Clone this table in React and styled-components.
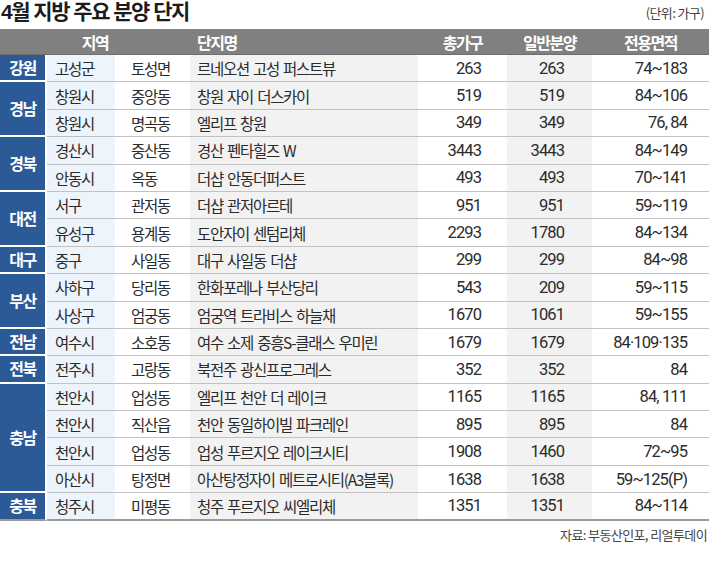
import React from 'react';
import styled, { createGlobalStyle } from 'styled-components';

const colors = {
  blue: '#2b5a96',
  header: '#808080',
  text: '#2b2b2b',
  line: '#c2c2c2',
  bottom: '#9a9a9a',
  lightBlue: '#edf4fb',
  lightGrey: '#f2f2f2',
  white: '#ffffff',
};

const GlobalStyle = createGlobalStyle`
  body {
    margin: 0;
    background: #fff;
    font-family: "Noto Sans CJK KR", "Noto Sans", sans-serif;
    color: ${colors.text};
  }
`;

const Page = styled.div`
  width: 709px;
  height: 583px;
`;

const TitleBar = styled.div`
  display: flex;
  justify-content: space-between;
  align-items: flex-start;
  height: 29px;
`;

// Liberation Sans first keeps the line box tight; hangul comes from Noto CJK
const Title = styled.h1`
  margin: 0;
  padding-left: 1px;
  font-family: "Liberation Sans", "Noto Sans CJK KR", sans-serif;
  font-size: 21px;
  line-height: 24px;
  font-weight: 700;
  letter-spacing: -1.5px;
  color: #1c1c1c;
`;

const Unit = styled.span`
  margin-top: 5px;
  padding-right: 5px;
  font-size: 13px;
  line-height: 16px;
  letter-spacing: -0.6px;
  color: #444;
`;

const Table = styled.table`
  width: 709px;
  table-layout: fixed;
  border-collapse: separate;
  border-spacing: 0;
`;

const Col = styled.col`
  width: ${p => p.$w}px;
`;

const Th = styled.th`
  box-sizing: border-box;
  height: 26px;
  padding: ${p => (p.$align === 'left' ? '0 0 0 7px' : '0')};
  background: ${colors.header};
  color: #fff;
  font-size: 16px;
  font-weight: 700;
  letter-spacing: -1.5px;
  text-align: ${p => p.$align || 'center'};
  border-bottom: 1px solid #6e6e6e;
`;

const Region = styled.td`
  box-sizing: border-box;
  height: 27.4px;
  padding: 0 0 1px;
  background: ${colors.blue};
  color: #fff;
  font-size: 16px;
  font-weight: 700;
  letter-spacing: -1.4px;
  text-align: center;
  border-right: 2px solid #fff;
  border-bottom: ${p => (p.$last ? `2px solid ${colors.bottom}` : '2px solid #fff')};
`;

const Td = styled.td`
  box-sizing: border-box;
  height: 27.4px;
  padding: ${p => (p.$num ? `0 ${p.$pad}px 0 0` : `0 0 0 ${p.$pad}px`)};
  background: ${p => p.$bg || colors.white};
  font-family: ${p => (p.$num ? 'Roboto, "Noto Sans CJK KR", sans-serif' : 'inherit')};
  font-size: ${p => (p.$num ? '16.5px' : '15.5px')};
  letter-spacing: ${p => (p.$num ? '-0.9px' : '-1.3px')};
  word-spacing: ${p => (p.$num ? '0' : '2px')};
  text-align: ${p => (p.$num ? 'right' : 'left')};
  white-space: nowrap;
  border-bottom: ${p => (p.$last ? `2px solid ${colors.bottom}` : `1.5px solid ${colors.line}`)};
`;

const Source = styled.div`
  margin-top: 4px;
  padding-right: 2px;
  text-align: right;
  font-size: 13px;
  letter-spacing: -0.6px;
  color: #444;
`;

const groups = [
  { region: '강원', rows: [['고성군', '토성면', '르네오션 고성 퍼스트뷰', '263', '263', '74~183']] },
  {
    region: '경남',
    rows: [
      ['창원시', '중앙동', '창원 자이 더스카이', '519', '519', '84~106'],
      ['창원시', '명곡동', '엘리프 창원', '349', '349', '76, 84'],
    ],
  },
  {
    region: '경북',
    rows: [
      ['경산시', '중산동', '경산 펜타힐즈 W', '3443', '3443', '84~149'],
      ['안동시', '옥동', '더샵 안동더퍼스트', '493', '493', '70~141'],
    ],
  },
  {
    region: '대전',
    rows: [
      ['서구', '관저동', '더샵 관저아르테', '951', '951', '59~119'],
      ['유성구', '용계동', '도안자이 센텀리체', '2293', '1780', '84~134'],
    ],
  },
  { region: '대구', rows: [['중구', '사일동', '대구 사일동 더샵', '299', '299', '84~98']] },
  {
    region: '부산',
    rows: [
      ['사하구', '당리동', '한화포레나 부산당리', '543', '209', '59~115'],
      ['사상구', '엄궁동', '엄궁역 트라비스 하늘채', '1670', '1061', '59~155'],
    ],
  },
  { region: '전남', rows: [['여수시', '소호동', '여수 소제 중흥S-클래스 우미린', '1679', '1679', '84·109·135']] },
  { region: '전북', rows: [['전주시', '고랑동', '북전주 광신프로그레스', '352', '352', '84']] },
  {
    region: '충남',
    rows: [
      ['천안시', '업성동', '엘리프 천안 더 레이크', '1165', '1165', '84, 111'],
      ['천안시', '직산읍', '천안 동일하이빌 파크레인', '895', '895', '84'],
      ['천안시', '업성동', '업성 푸르지오 레이크시티', '1908', '1460', '72~95'],
      ['아산시', '탕정면', '아산탕정자이 메트로시티(A3블록)', '1638', '1638', '59~125(P)'],
    ],
  },
  { region: '충북', rows: [['청주시', '미평동', '청주 푸르지오 씨엘리체', '1351', '1351', '84~114']] },
];

// width, background band and padding of each column after the region one
const widths = [47, 68, 75, 228, 89, 85, 117];
const columns = [
  { bg: colors.lightBlue, pad: 8 },
  { bg: colors.white, pad: 16 },
  { bg: colors.lightGrey, pad: 7 },
  { bg: colors.white, pad: 26, num: true },
  { bg: colors.lightGrey, pad: 28, num: true },
  { bg: colors.white, pad: 22, num: true },
];

export default function App() {
  return (
    <Page>
      <GlobalStyle />
      <TitleBar>
        <Title>4월 지방 주요 분양 단지</Title>
        <Unit>(단위: 가구)</Unit>
      </TitleBar>
      <Table>
        <colgroup>
          {widths.map((w, i) => (
            <Col key={i} $w={w} />
          ))}
        </colgroup>
        <thead>
          <tr>
            <Th colSpan={3}>지역</Th>
            <Th $align="left">단지명</Th>
            <Th>총가구</Th>
            <Th>일반분양</Th>
            <Th>전용면적</Th>
          </tr>
        </thead>
        <tbody>
          {groups.map((g, gi) => {
            const lastGroup = gi === groups.length - 1;
            return g.rows.map((row, ri) => {
              const lastRow = lastGroup && ri === g.rows.length - 1;
              return (
                <tr key={`${g.region}-${ri}`}>
                  {ri === 0 && (
                    <Region rowSpan={g.rows.length} $last={lastGroup}>
                      {g.region}
                    </Region>
                  )}
                  {row.map((cell, ci) => (
                    <Td
                      key={ci}
                      $bg={columns[ci].bg}
                      $pad={columns[ci].pad}
                      $num={columns[ci].num}
                      $last={lastRow}
                    >
                      {cell}
                    </Td>
                  ))}
                </tr>
              );
            });
          })}
        </tbody>
      </Table>
      <Source>자료: 부동산인포, 리얼투데이</Source>
    </Page>
  );
}
